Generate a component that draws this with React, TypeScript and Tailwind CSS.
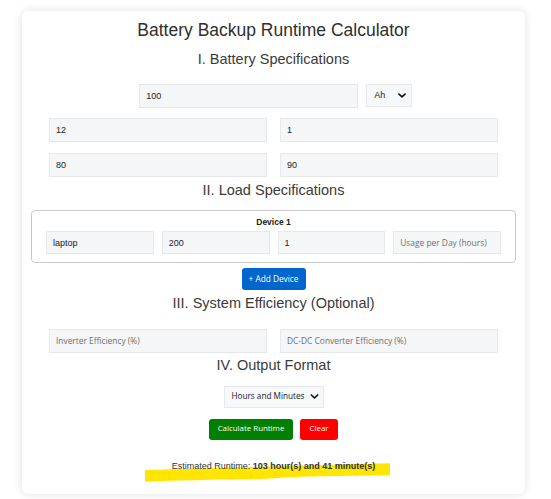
import React from "react";

const Chevron = ({ className }: { className?: string }) => (
  <svg viewBox="0 0 10 6" className={className} fill="none">
    <path d="M1.2 1.2 5 4.8 8.8 1.2" stroke="#111" strokeWidth="2" strokeLinecap="round" strokeLinejoin="round" />
  </svg>
);

const Field = ({
  value,
  placeholder,
  className = "",
}: {
  value?: string;
  placeholder?: string;
  className?: string;
}) => (
  <input
    defaultValue={value}
    placeholder={placeholder}
    className={`h-[24px] w-full min-w-0 border border-[#e6e8eb] bg-[#f5f6f8] px-[6px] text-[9px] text-[#222] outline-none font-['Liberation_Sans',Arial,sans-serif] placeholder:font-['Open_Sans',sans-serif] placeholder:text-[8.4px] placeholder:text-[#6f6f6f] ${className}`}
  />
);

const Heading = ({ children, className = "" }: { children: React.ReactNode; className?: string }) => (
  <h2 className={`text-center text-[14.5px] leading-[17px] text-[#3a3a3a] ${className}`}>{children}</h2>
);

export default function App() {
  return (
    <div className="min-h-[499px] bg-white pt-[11px] font-['Liberation_Sans',Arial,sans-serif]">
      <div className="ml-[22px] w-[503px] rounded-[6px] bg-white pt-[9px] pb-[22px] shadow-[0_0_10px_rgba(0,0,0,0.12)]">
        <h1 className="text-center text-[17.5px] leading-[20px] text-[#2f2f2f]">
          Battery Backup Runtime Calculator
        </h1>

        <Heading className="mt-[10.5px]">I. Battery Specifications</Heading>

        {/* capacity + unit */}
        <div className="mt-[16.5px] flex justify-center gap-[8px] pl-[4.5px]">
          <Field value="100" className="!w-[219px]" />
          <div className="flex h-[23px] w-[46px] items-center justify-between border border-[#e6e8eb] bg-[#f7f8f9] pl-[7px] pr-[5px] text-[9px] text-[#222]">
            <span>Ah</span>
            <Chevron className="h-[5px] w-[8px]" />
          </div>
        </div>

        <div className="mt-[10px] grid grid-cols-2 gap-x-[13px] gap-y-[11px] px-[27px]">
          <Field value="12" />
          <Field value="1" />
          <Field value="80" />
          <Field value="90" />
        </div>

        <Heading className="mt-[4.5px]">II. Load Specifications</Heading>

        <div className="mx-[9px] mt-[11.5px] rounded-[4px] border border-[#c9c9c9] px-[14px] pt-[5.5px] pb-[7.5px]">
          <div className="text-center text-[8.5px] font-bold leading-[11px] text-[#222]">Device 1</div>
          <div className="mt-[3.5px] grid grid-cols-4 gap-[8px]">
            <Field value="laptop" className="!h-[23px]" />
            <Field value="200" className="!h-[23px]" />
            <Field value="1" className="!h-[23px]" />
            <Field placeholder="Usage per Day (hours)" className="!h-[23px]" />
          </div>
        </div>

        <div className="mt-[5.5px] flex justify-center">
          <button className="h-[22px] w-[64px] rounded-[3px] bg-[#0066cc] text-[8.3px] text-white font-['Open_Sans',sans-serif]">
            + Add Device
          </button>
        </div>

        <Heading className="mt-[4.5px]">III. System Efficiency (Optional)</Heading>

        <div className="mt-[17px] grid grid-cols-2 gap-x-[13px] px-[27px]">
          <Field placeholder="Inverter Efficiency (%)" />
          <Field placeholder="DC-DC Converter Efficiency (%)" />
        </div>

        <Heading className="mt-[4.5px]">IV. Output Format</Heading>

        <div className="mt-[11.5px] flex justify-center">
          <div className="flex h-[22px] w-[100px] items-center justify-between border border-[#e6e8eb] bg-[#f7f8f9] pl-[7px] pr-[4px] text-[8.2px] text-[#222] font-['Open_Sans',sans-serif]">
            <span>Hours and Minutes</span>
            <Chevron className="h-[5px] w-[9px]" />
          </div>
        </div>

        <div className="mt-[11px] flex justify-center gap-[7px]">
          <button className="h-[21.5px] w-[84px] rounded-[3px] bg-[#008000] text-[7.9px] text-white font-['Open_Sans',sans-serif]">
            Calculate Runtime
          </button>
          <button className="h-[21.5px] w-[38px] rounded-[3px] bg-[#ff0000] text-[7.9px] text-white font-['Open_Sans',sans-serif]">
            Clear
          </button>
        </div>

        {/* result with marker highlight */}
        <div className="relative mt-[20px] text-center text-[9px] leading-[12px] text-[#333]">
          <svg
            viewBox="0 0 246 21"
            className="absolute left-[123px] top-[2px] h-[21px] w-[246px]"
          >
            <path
              d="M0 8 C 40 6.8 110 5 245 1.3 L 245 13.3 C 210 13.6 160 14.4 142 15.3 C 138 16.2 120 17 102 17.3 C 70 17.6 30 18.6 0 19.7 Z"
              fill="#ffe500"
            />
          </svg>
          <span className="relative">
            Estimated Runtime: <b>103 hour(s) and 41 minute(s)</b>
          </span>
        </div>
      </div>
    </div>
  );
}
